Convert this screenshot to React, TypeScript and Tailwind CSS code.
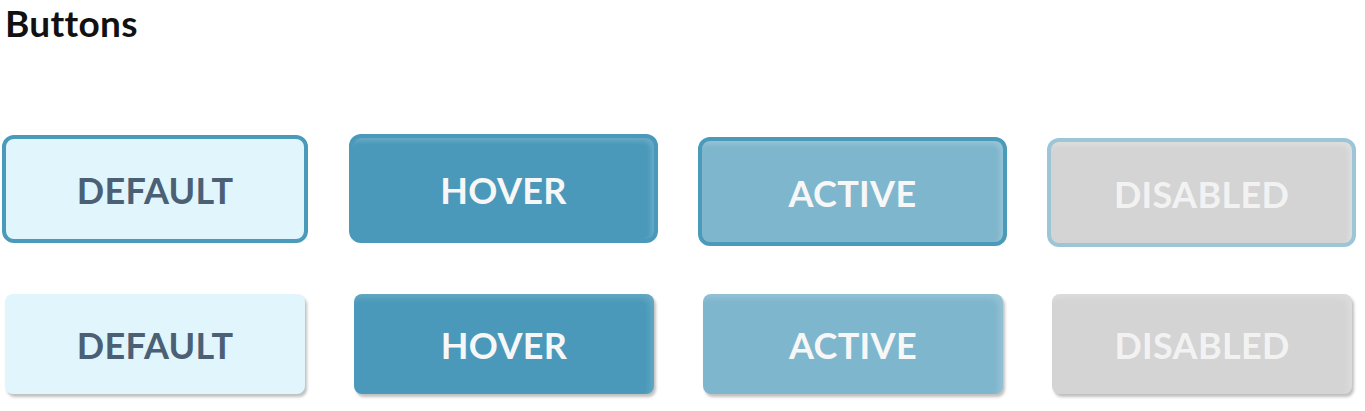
import React from "react";

// ──────────────────────────────
// Button state samples
// ──────────────────────────────

type Sample = {
  label: string;
  className: string;
};

const FONT = { fontFamily: '"Lato", "Open Sans", sans-serif' };

const bordered: Sample[] = [
  {
    label: "DEFAULT",
    className:
      "mt-[1px] ml-[2px] h-[108px] w-[306px] rounded-[12px] border-4 border-[#4a9aba] bg-[#e1f5fc] text-[#4b6075]",
  },
  {
    label: "HOVER",
    className:
      "h-[109px] w-[309px] rounded-[12px] border-4 border-[#4a99ba] bg-[#4a99ba] text-[#f7f7f7] shadow-[inset_-3px_3px_5px_rgba(255,255,255,0.18)]",
  },
  {
    label: "ACTIVE",
    className:
      "mt-[3px] h-[109px] w-[309px] rounded-[12px] border-4 border-[#4a9aba] bg-[#7eb6cd] text-[#f7f7f7] shadow-[inset_-3px_3px_5px_rgba(255,255,255,0.2)]",
  },
  {
    label: "DISABLED",
    className:
      "mt-[4px] h-[109px] w-[309px] rounded-[12px] border-4 border-[#9cc6d7] bg-[#d4d4d4] text-[#f2f2f2] shadow-[inset_-3px_3px_5px_rgba(255,255,255,0.25)]",
  },
];

const flat: Sample[] = [
  {
    label: "DEFAULT",
    className:
      "bg-[#e1f5fc] text-[#4b6075] shadow-[2px_3px_3px_rgba(0,0,0,0.25)]",
  },
  {
    label: "HOVER",
    className:
      "bg-[#4a99ba] text-[#f7f7f7] shadow-[inset_-4px_4px_6px_rgba(255,255,255,0.15),2px_3px_3px_rgba(0,0,0,0.25)]",
  },
  {
    label: "ACTIVE",
    className:
      "bg-[#7eb6cd] text-[#f7f7f7] shadow-[inset_-4px_4px_6px_rgba(255,255,255,0.18),2px_3px_3px_rgba(0,0,0,0.25)]",
  },
  {
    label: "DISABLED",
    className:
      "bg-[#d4d4d4] text-[#f2f2f2] shadow-[inset_-4px_4px_6px_rgba(255,255,255,0.2),2px_3px_3px_rgba(0,0,0,0.25)]",
  },
];

export default function App() {
  return (
    <div className="h-[411px] w-[1365px] bg-white" style={FONT}>
      {/* 제목 */}
      <h1 className="pl-[5px] pt-[2px] text-[37px] font-bold leading-[41px] tracking-[0.3px] text-[#111111]">
        Buttons
      </h1>

      {/* 테두리 있는 버튼 */}
      <div className="mt-[91px] grid grid-cols-[repeat(4,309px)] items-start gap-x-[40px]">
        {bordered.map((b) => (
          <div
            key={b.label}
            className={`flex items-center justify-center text-[36px] font-bold tracking-[0.3px] ${b.className}`}
          >
            <span className="mt-[2px]">{b.label}</span>
          </div>
        ))}
      </div>

      {/* 테두리 없는 버튼 */}
      <div className="mt-[47px] grid grid-cols-[repeat(4,309px)] items-start gap-x-[40px]">
        {flat.map((b) => (
          <div
            key={b.label}
            className={`ml-[5px] flex h-[100px] w-[300px] items-center justify-center rounded-[8px] text-[36px] font-bold tracking-[0.3px] ${b.className}`}
          >
            <span className="mt-[2px]">{b.label}</span>
          </div>
        ))}
      </div>
    </div>
  );
}
